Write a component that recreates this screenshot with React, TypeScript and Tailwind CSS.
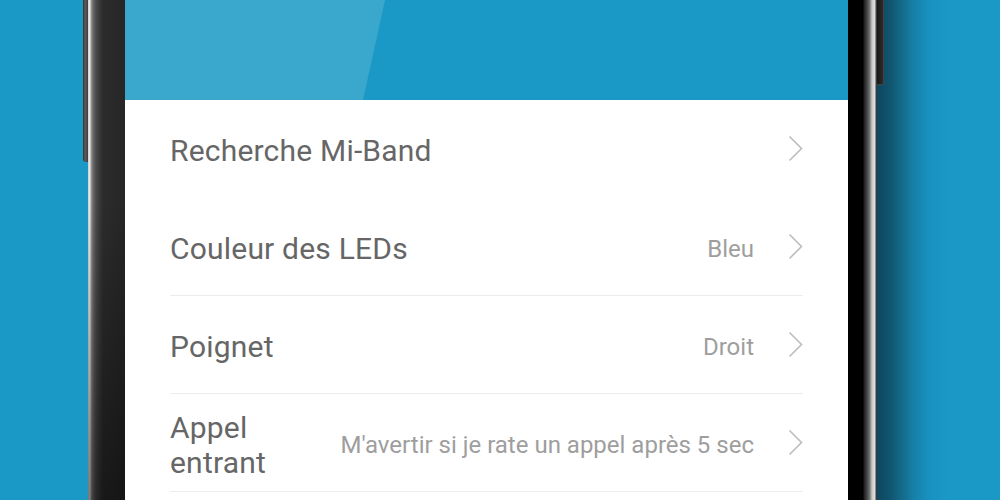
import React from 'react'

type Setting = {
    label: React.ReactNode
    value?: string
    divider: boolean
}

const settings: Setting[] = [
    { label: 'Recherche Mi-Band', divider: false },
    { label: 'Couleur des LEDs', value: 'Bleu', divider: true },
    { label: 'Poignet', value: 'Droit', divider: true },
    { label: 'Appel entrant', value: 'M\'avertir si je rate un appel après 5 sec', divider: true },
]

function Chevron() {
    return (
        <svg width="15" height="27" viewBox="0 0 15 27" className="shrink-0 ml-[34px]">
            <polyline points="1.5,1.5 13.5,13.5 1.5,25.5" fill="none" stroke="#bdbdbd" strokeWidth="1.6" />
        </svg>
    )
}

function SettingRow({ setting }: { setting: Setting }) {
    return (
        <div
            className={`flex items-center h-[98px] border-b ${setting.divider ? 'border-[#ededed]' : 'border-transparent'}`}
        >
            <div className="flex-1 min-w-0 pt-[4px] text-[30px] leading-[35px] tracking-[0.2px] text-[#666666]">
                {setting.label}
            </div>
            {setting.value && (
                <div className="whitespace-nowrap pt-[5px] text-[24px] text-[#9e9e9e]">{setting.value}</div>
            )}
            <Chevron />
        </div>
    )
}

export default function App() {
    return (
        <div className="flex h-[500px] w-[1000px] overflow-hidden bg-[#1a98c6] font-['Roboto',sans-serif]">
            {/* left side of the page + volume key */}
            <div className="w-[83px] shrink-0" />
            <div className="w-[5px] shrink-0">
                <div className="h-[162px] rounded-bl-[3px] bg-[linear-gradient(to_right,#2f2f2f,#5c5c5c_40%,#3c3c3c)]" />
            </div>

            {/* phone bezel, left */}
            <div className="w-[37px] shrink-0 bg-[linear-gradient(to_right,#cfcfcf_0px,#ededed_2px,#9a9a9a_3px,#6a6a6a_5px,#4a4a4a_8px,#373737_12px,#2c2c2c_15px,#262626_37px)]">
                <div className="h-full bg-[linear-gradient(to_bottom,transparent_40%,rgba(0,0,0,0.45))]" />
            </div>

            {/* screen */}
            <div className="flex w-[723px] shrink-0 flex-col">
                <div className="relative h-[100px] shrink-0 overflow-hidden bg-[#1a98c6]">
                    <svg className="absolute inset-0" width="723" height="100">
                        <polygon points="0,0 260,0 238,100 0,100" fill="#3aa8cd" />
                    </svg>
                </div>
                <div className="flex-1 bg-white px-[45px]">
                    {settings.map((s, i) => (
                        <SettingRow key={i} setting={s} />
                    ))}
                </div>
            </div>

            {/* phone bezel, right */}
            <div className="w-[29px] shrink-0 bg-[linear-gradient(to_right,#000000_0px,#000000_15px,#1e1e1e_16px,#444444_19px,#7a7a7a_22px,#c8c8c8_24px,#e2e2e2_27px,#3a3a3a_28px)]" />

            {/* side shadow + power key */}
            <div className="flex flex-1 items-start bg-[linear-gradient(to_right,#0e4660_0px,#11566f_14px,#167fa6_36px,#1991bf_52px,#1a98c6_70px)]">
                <div className="h-[85px] w-[7px] rounded-br-[2px] border-r border-b border-[#444] bg-[linear-gradient(to_right,#161616,#2c2c2c)]" />
            </div>
        </div>
    )
}
